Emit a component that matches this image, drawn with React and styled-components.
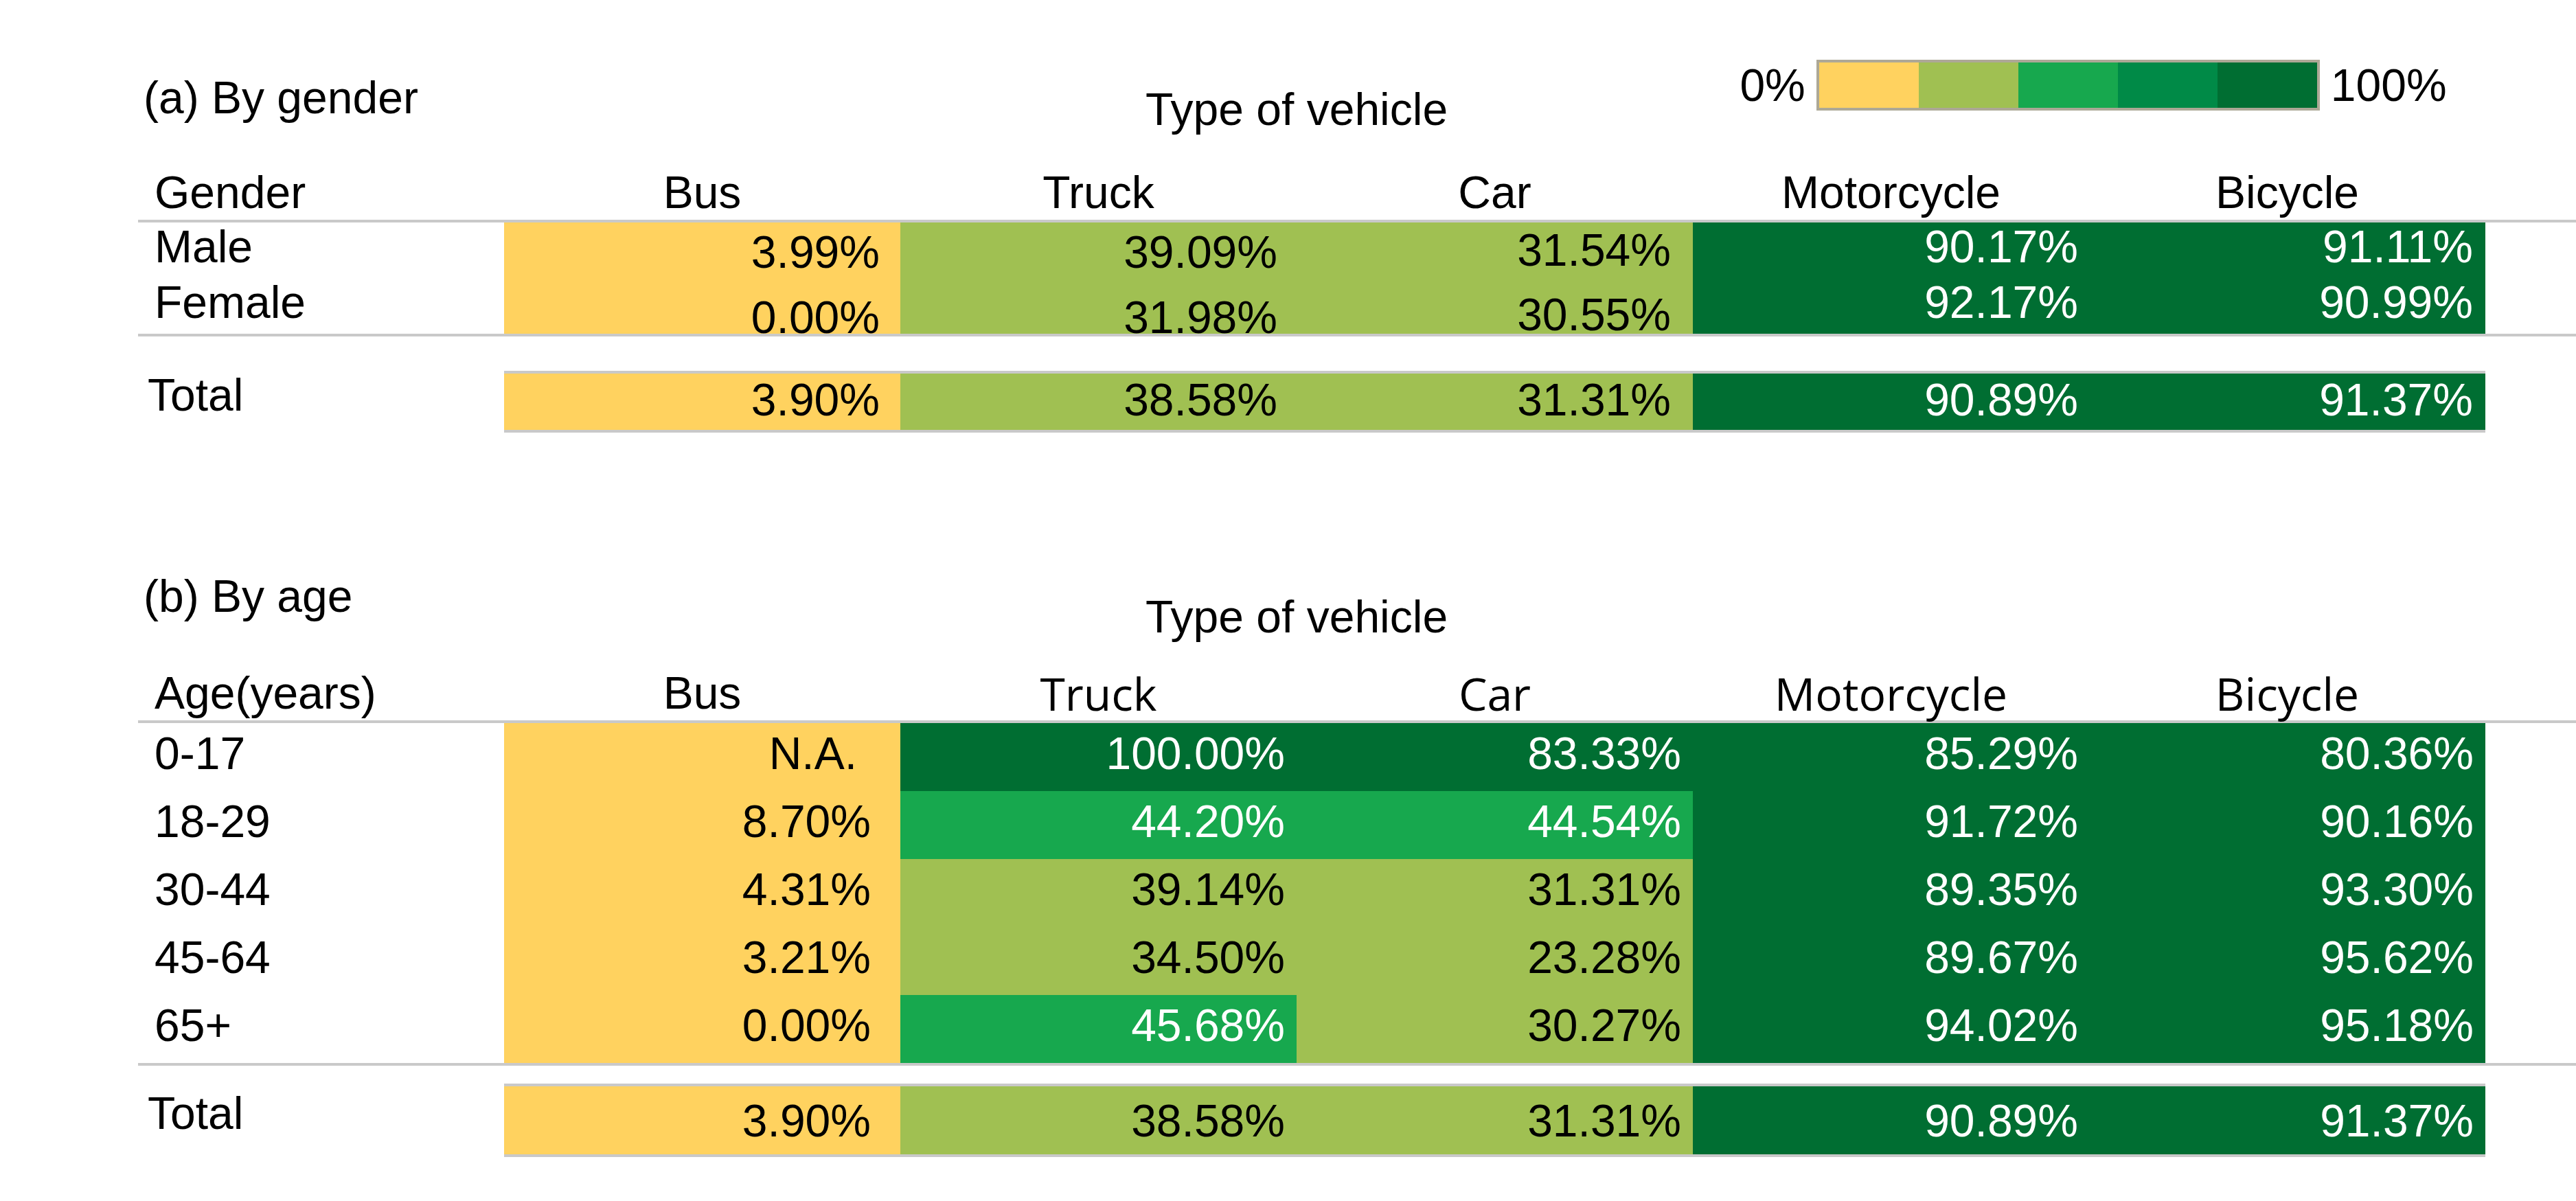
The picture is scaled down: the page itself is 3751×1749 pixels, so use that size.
import React from 'react';
import styled, { createGlobalStyle } from 'styled-components';

const GlobalStyle = createGlobalStyle`
  *, *::before, *::after { box-sizing: border-box; }
  html, body { margin: 0; padding: 0; background: #ffffff; }
  body {
    font-family: "Liberation Sans", Arial, sans-serif;
    color: #000000;
  }
`;

// column grid shared by captions, headers and rows
const COLS = '533px repeat(5, 577px)';
const LINE = '#c9c9c9';

const Y = '#ffd25f';
const O = '#a0c052';
const G = '#17a84e';
const G2 = '#008a47';
const D = '#006e32';

const inkFor = (bg) => (bg === G || bg === D ? '#ffffff' : '#000000');

const Sheet = styled.main`
  width: 3751px;
  padding-left: 201px;
  font-size: 66px;
  line-height: 80px;
`;

const Caption = styled.div`
  display: grid;
  grid-template-columns: ${COLS};
  height: ${(p) => p.$h}px;
`;

const Title = styled.div`
  grid-column: 1 / 3;
  grid-row: 1;
  align-self: start;
  margin-top: ${(p) => p.$top}px;
  padding-left: 8px;
  white-space: nowrap;
`;

const TypeLabel = styled.div`
  grid-column: 2 / 6;
  grid-row: 1;
  justify-self: center;
  align-self: start;
  margin-top: ${(p) => p.$top}px;
  white-space: nowrap;
`;

const Legend = styled.div`
  grid-column: 5 / 7;
  grid-row: 1;
  justify-self: center;
  align-self: start;
  margin-top: 84px;
  margin-left: 12px;
  display: flex;
  align-items: center;
  gap: 16px;
`;

const ScaleBar = styled.div`
  display: flex;
  border: 4px solid #ada896;
`;

const Swatch = styled.span`
  width: 145px;
  height: 66px;
  background: ${(p) => p.$c};
`;

const HeaderRow = styled.div`
  display: grid;
  grid-template-columns: ${COLS};
  height: 84px;
  border-bottom: 4px solid ${LINE};
`;

const HeadCell = styled.div`
  display: flex;
  align-items: center;
  justify-content: ${(p) => (p.$left ? 'flex-start' : 'center')};
  padding: 0 0 ${(p) => p.$pb}px ${(p) => (p.$left ? 24 : 0)}px;
  font-family: ${(p) =>
    p.$humanist
      ? '"Open Sans", "Noto Sans", sans-serif'
      : '"Liberation Sans", Arial, sans-serif'};
  white-space: nowrap;
`;

const Body = styled.div`
  display: grid;
  grid-template-columns: ${COLS};
  grid-auto-rows: ${(p) => p.$rh}px;
  border-bottom: 4px solid ${LINE};
`;

const RowLabel = styled.div`
  display: flex;
  align-items: center;
  padding: 0 0 11px 24px;
  line-height: 1;
  white-space: nowrap;
`;

const Value = styled.div`
  display: flex;
  align-items: center;
  justify-content: flex-end;
  overflow: hidden;
  white-space: nowrap;
  line-height: 1;
  background: ${(p) => p.$bg};
  color: ${(p) => inkFor(p.$bg)};
  padding: ${(p) => 2 * (p.$drop || 0)}px ${(p) => p.$pr}px ${(p) => p.$pb}px 0;
`;

const TotalRow = styled.div`
  display: grid;
  grid-template-columns: ${COLS};
  height: ${(p) => p.$h}px;
  margin-top: ${(p) => p.$gap}px;
`;

const TotalLabel = styled.div`
  display: flex;
  align-items: center;
  line-height: 1;
  padding: 0 0 ${(p) => p.$pb}px 14px;
`;

const TotalValue = styled(Value)`
  border-top: 4px solid ${LINE};
  border-bottom: 4px solid ${LINE};
`;

const gender = {
  title: '(a) By gender',
  caption: 240,
  titleTop: 102,
  typeTop: 119,
  legend: true,
  headPad: 14,
  headers: [
    { text: 'Gender', left: true },
    { text: 'Bus' },
    { text: 'Truck' },
    { text: 'Car' },
    { text: 'Motorcycle' },
    { text: 'Bicycle' },
  ],
  rowHeight: 81,
  pads: [30, 28, 32, 16, 18],
  rows: [
    {
      label: 'Male',
      cells: [['3.99%', Y, 8], ['39.09%', O, 8], ['31.54%', O, 5], ['90.17%', D], ['91.11%', D]],
    },
    {
      // the first three values sit low in their cells and get clipped by the rule
      label: 'Female',
      cells: [['0.00%', Y, 22], ['31.98%', O, 22], ['30.55%', O, 18], ['92.17%', D], ['90.99%', D]],
    },
  ],
  gap: 50,
  total: {
    height: 90,
    labelPb: 20,
    valuePb: 6,
    cells: [['3.90%', Y], ['38.58%', O], ['31.31%', O], ['90.89%', D], ['91.37%', D]],
  },
};

const age = {
  title: '(b) By age',
  caption: 339,
  titleTop: 198,
  typeTop: 228,
  legend: false,
  headPad: 10,
  headers: [
    { text: 'Age(years)', left: true },
    { text: 'Bus' },
    { text: 'Truck', humanist: true },
    { text: 'Car', humanist: true },
    { text: 'Motorcycle', humanist: true },
    { text: 'Bicycle', humanist: true },
  ],
  rowHeight: 99,
  pads: [43, 17, 17, 16, 17],
  rows: [
    {
      label: '0-17',
      cells: [['N.A.', Y, 0, 63], ['100.00%', D], ['83.33%', D], ['85.29%', D], ['80.36%', D]],
    },
    {
      label: '18-29',
      cells: [['8.70%', Y], ['44.20%', G], ['44.54%', G], ['91.72%', D], ['90.16%', D]],
    },
    {
      label: '30-44',
      cells: [['4.31%', Y], ['39.14%', O], ['31.31%', O], ['89.35%', D], ['93.30%', D]],
    },
    {
      label: '45-64',
      cells: [['3.21%', Y], ['34.50%', O], ['23.28%', O], ['89.67%', D], ['95.62%', D]],
    },
    {
      label: '65+',
      cells: [['0.00%', Y], ['45.68%', G], ['30.27%', O], ['94.02%', D], ['95.18%', D]],
    },
  ],
  gap: 26,
  total: {
    height: 107,
    labelPb: 21,
    valuePb: 0,
    cells: [['3.90%', Y], ['38.58%', O], ['31.31%', O], ['90.89%', D], ['91.37%', D]],
  },
};

function ColourScale() {
  return (
    <Legend>
      <span>0%</span>
      <ScaleBar>
        {[Y, O, G, G2, D].map((c) => (
          <Swatch key={c} $c={c} />
        ))}
      </ScaleBar>
      <span>100%</span>
    </Legend>
  );
}

function HeatTable({ t }) {
  return (
    <section>
      <Caption $h={t.caption}>
        <Title $top={t.titleTop}>{t.title}</Title>
        <TypeLabel $top={t.typeTop}>Type of vehicle</TypeLabel>
        {t.legend && <ColourScale />}
      </Caption>

      <HeaderRow>
        {t.headers.map((h) => (
          <HeadCell key={h.text} $left={h.left} $humanist={h.humanist} $pb={t.headPad}>
            {h.text}
          </HeadCell>
        ))}
      </HeaderRow>

      <Body $rh={t.rowHeight}>
        {t.rows.map((r) => (
          <React.Fragment key={r.label}>
            <RowLabel>{r.label}</RowLabel>
            {r.cells.map(([v, bg, drop, pr], i) => (
              <Value key={i} $bg={bg} $drop={drop} $pr={pr ?? t.pads[i]} $pb={11}>
                {v}
              </Value>
            ))}
          </React.Fragment>
        ))}
      </Body>

      <TotalRow $h={t.total.height} $gap={t.gap}>
        <TotalLabel $pb={t.total.labelPb}>Total</TotalLabel>
        {t.total.cells.map(([v, bg], i) => (
          <TotalValue key={i} $bg={bg} $pr={t.pads[i]} $pb={t.total.valuePb}>
            {v}
          </TotalValue>
        ))}
      </TotalRow>
    </section>
  );
}

export default function App() {
  return (
    <>
      <GlobalStyle />
      <Sheet>
        <HeatTable t={gender} />
        <HeatTable t={age} />
      </Sheet>
    </>
  );
}
